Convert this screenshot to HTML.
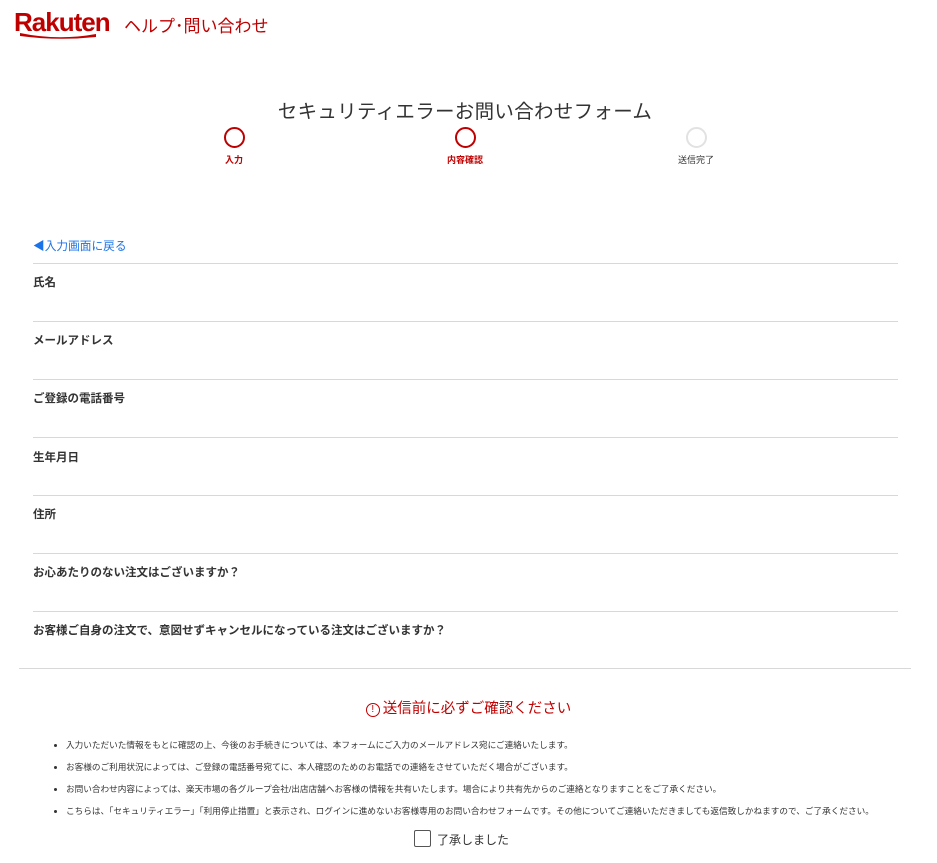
<!DOCTYPE html>
<html><head><meta charset="utf-8"><style>
body{margin:0;background:#fff;font-family:"Liberation Sans","Noto Sans CJK JP",sans-serif;color:#333;width:937px;height:863px;position:relative;overflow:hidden}
.a{position:absolute;white-space:nowrap}
.line{position:absolute;left:33px;width:865px;height:1px;background:#d8d8d8}
.lab{position:absolute;left:33px;font-size:11.5px;font-weight:bold;color:#333}
.c{position:absolute;width:17px;height:17px;border:2px solid #bf0000;border-radius:50%;top:127px}
.s{position:absolute;font-size:9px;top:153px;width:80px;text-align:center}
.b{position:absolute;left:66px;font-size:8.65px;color:#333}
.b:before{content:"";position:absolute;left:-12px;top:5px;width:3px;height:3px;background:#333;border-radius:50%}
</style></head><body>
<div class="a" style="left:14px;top:7px;font-size:26px;font-weight:bold;color:#bf0000;letter-spacing:-1px">Rakuten</div>
<svg class="a" style="left:18px;top:31px" width="80" height="9"><path d="M2 2 Q40 10 78 3 L78 6 Q40 10 2 5Z" fill="#bf0000"/></svg>
<div class="a" style="left:124px;top:12px;font-size:17px;color:#bf0000">ヘルプ･問い合わせ</div>
<div class="a" style="left:0;width:930px;text-align:center;top:95px;font-size:19.5px;color:#333;letter-spacing:0.3px">セキュリティエラーお問い合わせフォーム</div>
<div class="c" style="left:224px"></div>
<div class="c" style="left:455px"></div>
<div class="c" style="left:686px;border-color:#e2e2e2"></div>
<div class="s" style="left:194px;color:#bf0000;font-weight:bold">入力</div>
<div class="s" style="left:425px;color:#bf0000;font-weight:bold">内容確認</div>
<div class="s" style="left:656px;color:#333">送信完了</div>
<div class="a" style="left:33px;top:237px;font-size:11.7px;color:#1a73e8">◀入力画面に戻る</div>
<div class="line" style="top:263px"></div>
<div class="lab" style="top:274px">氏名</div>
<div class="line" style="top:321px"></div>
<div class="lab" style="top:332px">メールアドレス</div>
<div class="line" style="top:379px"></div>
<div class="lab" style="top:390px">ご登録の電話番号</div>
<div class="line" style="top:437px"></div>
<div class="lab" style="top:449px">生年月日</div>
<div class="line" style="top:495px"></div>
<div class="lab" style="top:506px">住所</div>
<div class="line" style="top:553px"></div>
<div class="lab" style="top:564px">お心あたりのない注文はございますか？</div>
<div class="line" style="top:611px"></div>
<div class="lab" style="top:622px">お客様ご自身の注文で、意図せずキャンセルになっている注文はございますか？</div>
<div class="line" style="top:668px;left:19px;width:892px"></div>
<div class="a" style="left:0;width:937px;text-align:center;top:697px;font-size:14.5px;color:#bf0000"><span style="display:inline-block;width:12px;height:12px;border:1.5px solid #bf0000;border-radius:50%;font-size:10px;line-height:12px;vertical-align:1px;margin-right:3px">!</span>送信前に必ずご確認ください</div>
<div class="b" style="top:739px">入力いただいた情報をもとに確認の上、今後のお手続きについては、本フォームにご入力のメールアドレス宛にご連絡いたします。</div>
<div class="b" style="top:761px">お客様のご利用状況によっては、ご登録の電話番号宛てに、本人確認のためのお電話での連絡をさせていただく場合がございます。</div>
<div class="b" style="top:783px">お問い合わせ内容によっては、楽天市場の各グループ会社/出店店舗へお客様の情報を共有いたします。場合により共有先からのご連絡となりますことをご了承ください。</div>
<div class="b" style="top:805px">こちらは、「セキュリティエラー」「利用停止措置」と表示され、ログインに進めないお客様専用のお問い合わせフォームです。その他についてご連絡いただきましても返信致しかねますので、ご了承ください。</div>
<div class="a" style="left:414px;top:830px;width:15px;height:15px;border:1px solid #555;border-radius:2px"></div>
<div class="a" style="left:437px;top:831px;font-size:12px;color:#333">了承しました</div>
</body></html>
